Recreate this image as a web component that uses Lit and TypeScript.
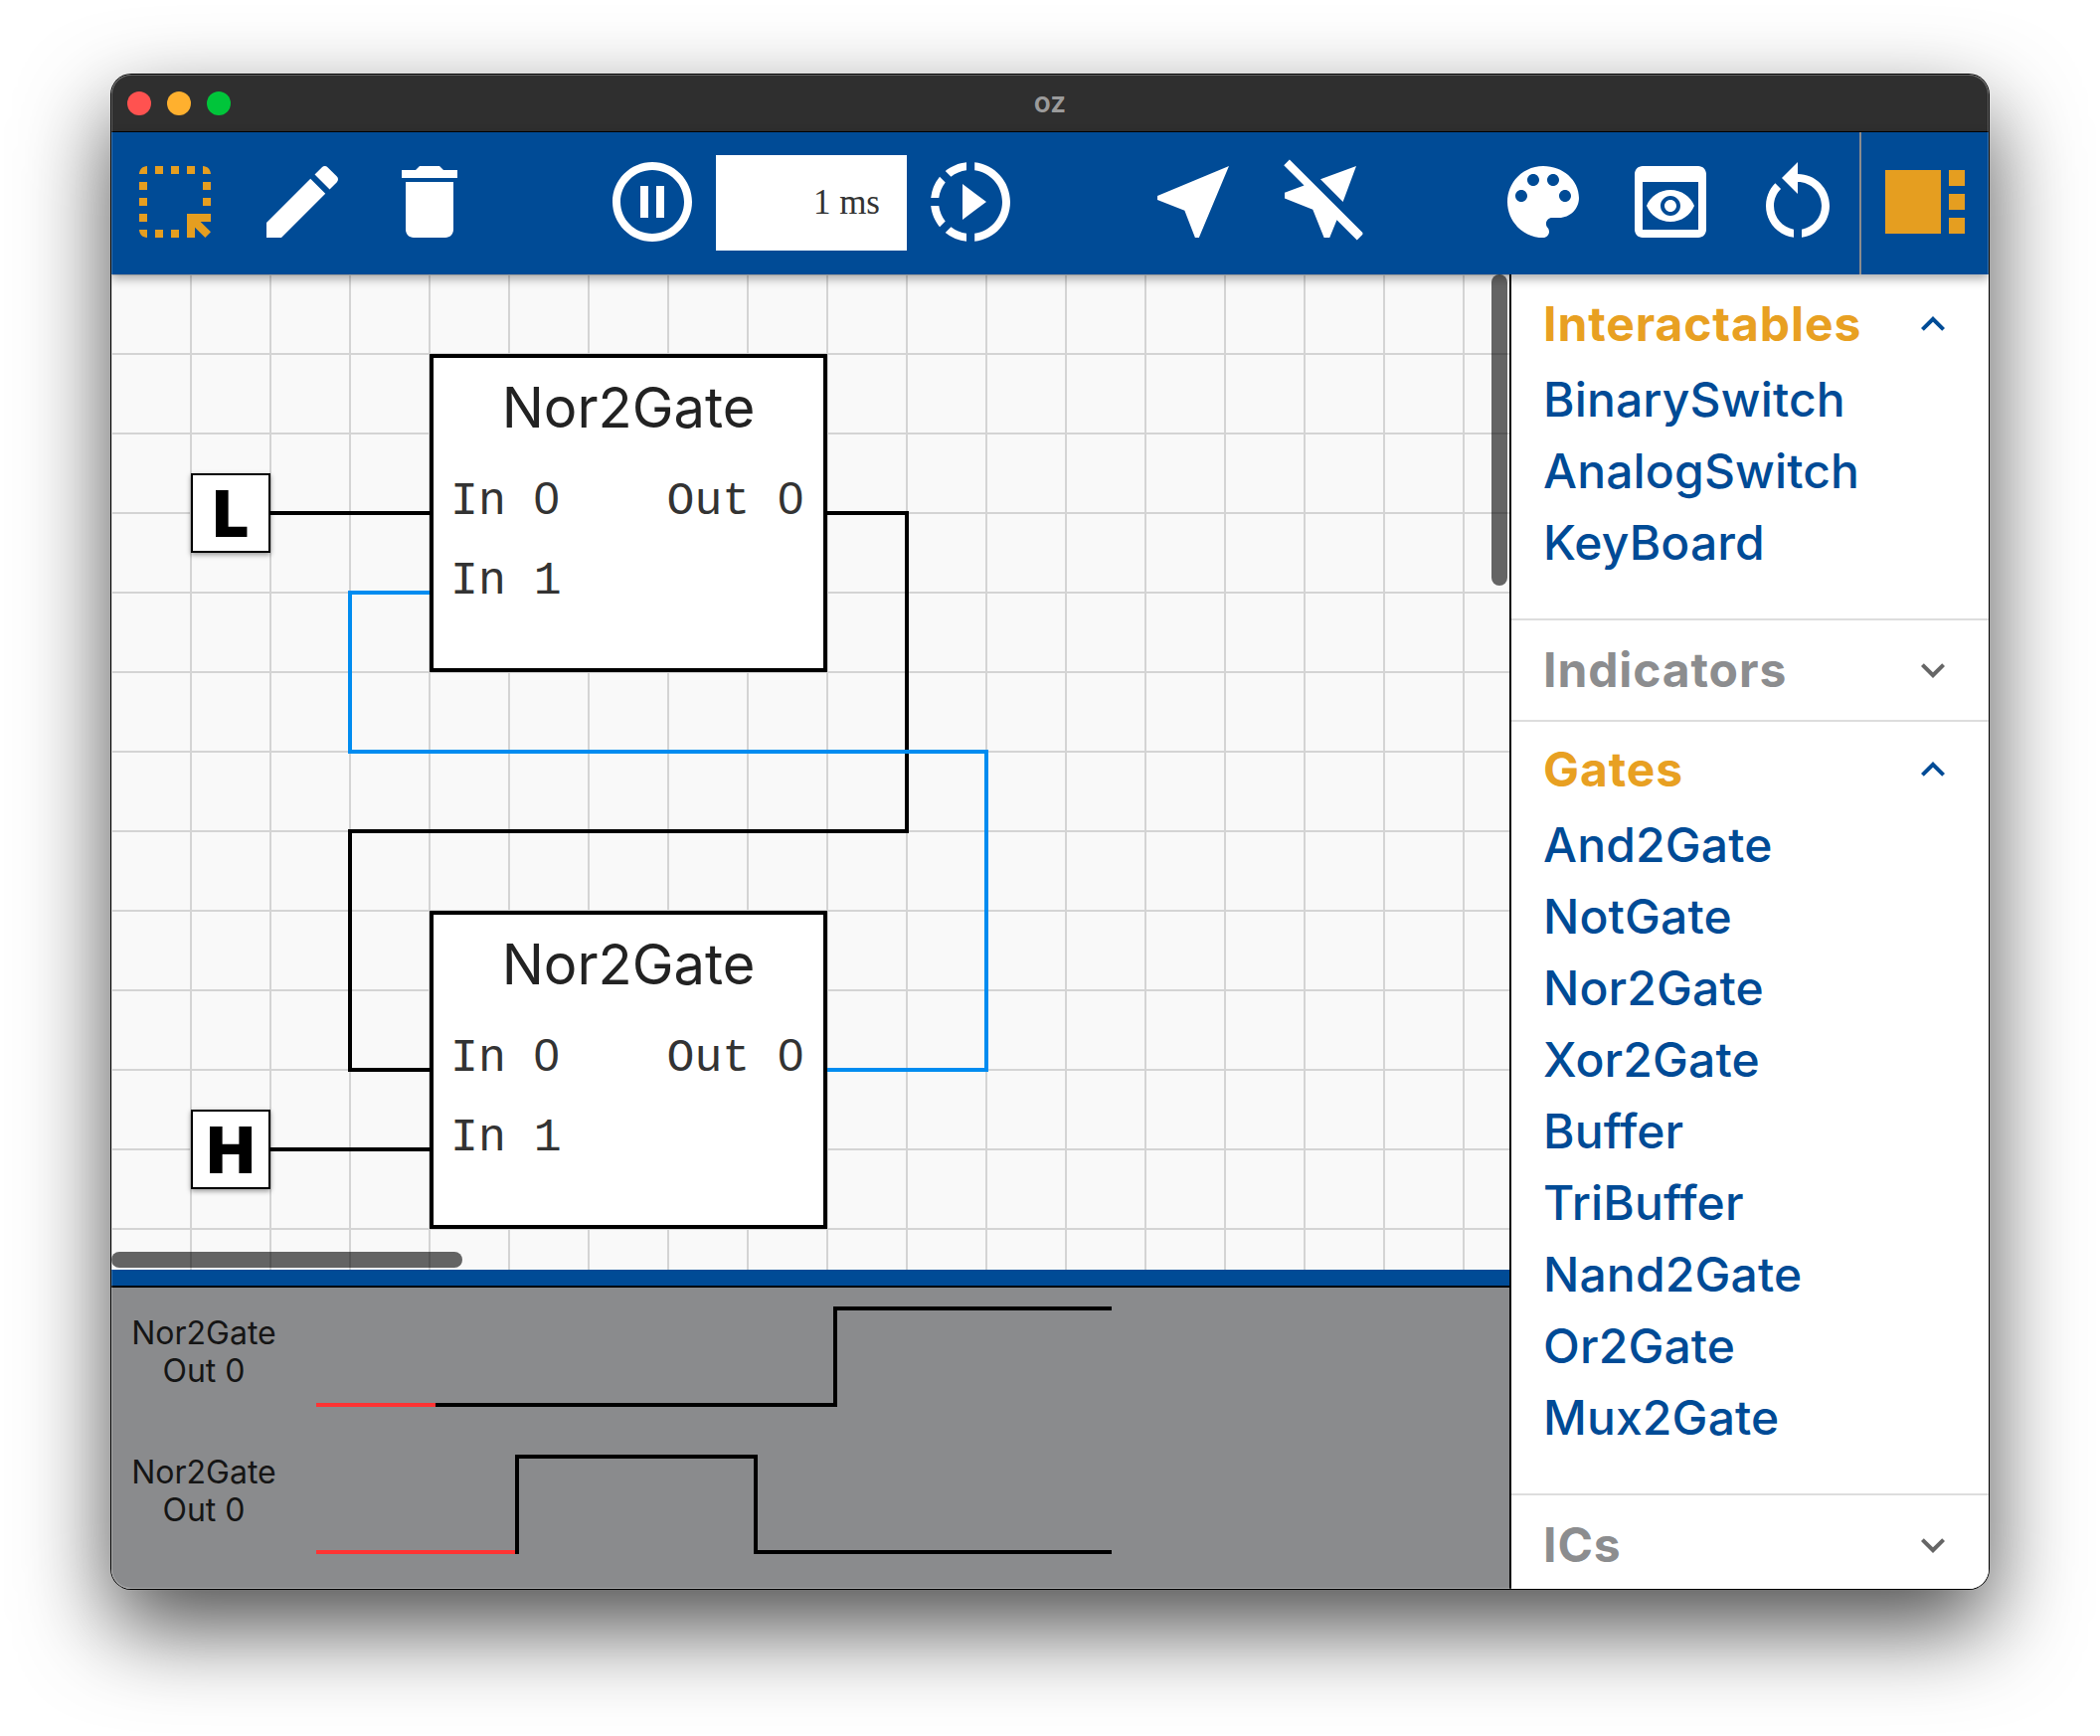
import { LitElement, html, svg, css } from "lit";
import { customElement } from "lit/decorators.js";

const ICONS: Record<string, string> = {
  select: "M17 5h-2V3h2v2zm-2 16h2v-2.59L19.59 21 21 19.59 18.41 17H21v-2h-6v6zm4-12h2V7h-2v2zm0 4h2v-2h-2v2zm-8 8h2v-2h-2v2zM7 5h2V3H7v2zM3 17h2v-2H3v2zm2 4v-2H3c0 1.1.9 2 2 2zM19 3v2h2c0-1.1-.9-2-2-2zm-8 2h2V3h-2v2zM3 9h2V7H3v2zm4 12h2v-2H7v2zm-4-8h2v-2H3v2zm0-8h2V3c-1.1 0-2 .9-2 2z",
  edit: "M3 17.25V21h3.75L17.81 9.94l-3.75-3.75L3 17.25zM20.71 7.04c.39-.39.39-1.02 0-1.41l-2.34-2.34c-.39-.39-1.02-.39-1.41 0l-1.83 1.83 3.75 3.75 1.83-1.83z",
  trash: "M6 19c0 1.1.9 2 2 2h8c1.1 0 2-.9 2-2V7H6v12zM19 4h-3.5l-1-1h-5l-1 1H5v2h14V4z",
  pause: "M9 16h2V8H9v8zm3-14C6.48 2 2 6.48 2 12s4.48 10 10 10 10-4.48 10-10S17.52 2 12 2zm0 18c-4.41 0-8-3.59-8-8s3.59-8 8-8 8 3.59 8 8-3.59 8-8 8zm1-4h2V8h-2v8z",
  slowmo: "M13.05 9.79L10 7.5v9l3.05-2.29L16 12zM11 4.07V2.05c-2.01.2-3.84 1-5.32 2.21L7.1 5.69A7.941 7.941 0 0 1 11 4.07zM5.69 7.1L4.26 5.68A9.949 9.949 0 0 0 2.05 11h2.02c.18-1.46.76-2.79 1.62-3.9zM4.07 13H2.05c.2 2.01 1 3.84 2.21 5.32l1.43-1.43A7.868 7.868 0 0 1 4.07 13zm1.61 6.74A9.981 9.981 0 0 0 11 21.95v-2.02a7.941 7.941 0 0 1-3.9-1.62l-1.42 1.43zM22 12c0 5.16-3.92 9.42-8.95 9.95v-2.02C16.97 19.41 20 16.05 20 12s-3.03-7.41-6.95-7.93V2.05C18.08 2.58 22 6.84 22 12z",
  near: "M21 3L3 10.53v.98l6.84 2.65L12.48 21h.98L21 3z",
  nearOff: "M12 6.34L21 3l-3.34 9L12 6.34zM22.61 19.78L4.22 1.39 2.81 2.81l5.07 5.07L3 9.69v1.41l7.07 2.83L12.9 21h1.41l1.81-4.46 5.07 5.07 1.42-1.42z",
  palette: "M12 3c-4.97 0-9 4.03-9 9s4.03 9 9 9c.83 0 1.5-.67 1.5-1.5 0-.39-.15-.74-.39-1.01-.23-.26-.38-.61-.38-.99 0-.83.67-1.5 1.5-1.5H16c2.76 0 5-2.24 5-5 0-4.42-4.03-8-9-8zm-5.5 9c-.83 0-1.5-.67-1.5-1.5S5.67 9 6.5 9 8 9.67 8 10.5 7.33 12 6.5 12zm3-4C8.67 8 8 7.33 8 6.5S8.67 5 9.5 5s1.5.67 1.5 1.5S10.33 8 9.5 8zm5 0c-.83 0-1.5-.67-1.5-1.5S13.67 5 14.5 5s1.5.67 1.5 1.5S15.33 8 14.5 8zm3 4c-.83 0-1.5-.67-1.5-1.5S16.67 9 17.5 9s1.5.67 1.5 1.5-.67 1.5-1.5 1.5z",
  preview: "M19 3H5C3.89 3 3 3.9 3 5v14c0 1.1.89 2 2 2h14c1.1 0 2-.9 2-2V5C21 3.9 20.11 3 19 3zM19 19H5V7h14V19zM13.5 13c0 .83-.67 1.5-1.5 1.5s-1.5-.67-1.5-1.5c0-.83.67-1.5 1.5-1.5S13.5 12.17 13.5 13zM12 9c-2.73 0-5.06 1.66-6 4 .94 2.34 3.27 4 6 4s5.06-1.66 6-4C17.06 10.66 14.73 9 12 9zM12 15.5c-1.38 0-2.5-1.12-2.5-2.5 0-1.38 1.12-2.5 2.5-2.5 1.38 0 2.5 1.12 2.5 2.5C14.5 14.38 13.38 15.5 12 15.5z",
  restart: "M12 5V2L8 6l4 4V7c3.31 0 6 2.69 6 6 0 2.97-2.16 5.43-5 5.91v2.02c3.95-.49 7-3.85 7-7.93 0-4.42-3.58-8-8-8zm-6 8c0-1.65.67-3.15 1.76-4.24L6.34 7.34C4.9 8.79 4 10.79 4 13c0 4.08 3.05 7.44 7 7.93v-2.02c-2.84-.48-5-2.94-5-5.91z",
  sidebar: "M16 20H2V4h14v16zm2-12h4V4h-4v4zm0 12h4v-4h-4v4zm0-6h4v-4h-4v4z",
  up: "M12 8l-6 6 1.41 1.41L12 10.83l4.59 4.58L18 14z",
  down: "M16.59 8.59L12 13.17 7.41 8.59 6 10l6 6 6-6z",
};

const icon = (name: string, size = 96) => html`<svg width=${size} height=${size} viewBox="0 0 24 24" fill="currentColor"><path d=${ICONS[name]}></path></svg>`;

const SECTIONS = [
  { title: "Interactables", open: true, items: ["BinarySwitch", "AnalogSwitch", "KeyBoard"] },
  { title: "Indicators", open: false, items: [] },
  { title: "Gates", open: true, items: ["And2Gate", "NotGate", "Nor2Gate", "Xor2Gate", "Buffer", "TriBuffer", "Nand2Gate", "Or2Gate", "Mux2Gate"] },
  { title: "ICs", open: false, items: [] },
];

// canvas coordinates, origin at the top left of the grid
const GATES = [{ x: 320, y: 80 }, { x: 320, y: 640 }];
const SWITCHES = [{ x: 80, y: 200, label: "L" }, { x: 80, y: 840, label: "H" }];
const BLACK_WIRES = [
  "M160 240H320",
  "M160 880H320",
  "M720 240H800V560H240V800H320",
];
const BLUE_WIRES = [
  "M320 320H240V480H880V800H720",
];

// Liberation Mono dots its zero, the reference does not
const zero = html`<span class="zero">0</span>`;

@customElement("app-root")
export class AppRoot extends LitElement {
  render() {
    return html`
      <div class="window">
        <header class="titlebar">
          <div class="lights">
            <span class="light red"></span>
            <span class="light amber"></span>
            <span class="light green"></span>
          </div>
          <span class="title">oz</span>
        </header>
        <nav class="toolbar">
          <button class="tool orange">${icon("select")}</button>
          <button class="tool">${icon("edit")}</button>
          <button class="tool">${icon("trash")}</button>
          <span class="space"></span>
          <button class="tool">${icon("pause")}</button>
          <div class="delay">1 ms</div>
          <button class="tool">${icon("slowmo")}</button>
          <span class="space"></span>
          <button class="tool">${icon("near")}</button>
          <button class="tool">${icon("nearOff")}</button>
          <span class="space"></span>
          <button class="tool">${icon("palette")}</button>
          <button class="tool">${icon("preview")}</button>
          <button class="tool">${icon("restart")}</button>
          <button class="tool orange panel">${icon("sidebar")}</button>
        </nav>
        <div class="body">
          <main class="main">
            <section class="canvas">
              <svg class="wires" width="1408" height="1000" fill="none" stroke-width="4" stroke-linejoin="miter">
                ${BLACK_WIRES.map((d) => svg`<path d=${d} stroke="#000"></path>`)}
                ${BLUE_WIRES.map((d) => svg`<path d=${d} stroke="#008cf0"></path>`)}
              </svg>
              ${GATES.map((g) => html`
                <div class="gate" style="left:${g.x}px;top:${g.y}px">
                  <div class="gate-name">Nor2Gate</div>
                  <div class="ports">
                    <span>In ${zero}</span><span>Out ${zero}</span>
                    <span>In 1</span>
                  </div>
                </div>`)}
              ${SWITCHES.map((s) => html`
                <div class="switch" style="left:${s.x}px;top:${s.y}px">${s.label}</div>`)}
              <div class="scroll-v"></div>
              <div class="scroll-h"></div>
            </section>
            <div class="splitter"></div>
            <section class="graph">
              <div class="graph-row">
                <div class="graph-label">Nor2Gate<br />Out 0</div>
              </div>
              <div class="graph-row">
                <div class="graph-label">Nor2Gate<br />Out 0</div>
              </div>
              <svg class="waves" width="1100" height="300" fill="none" stroke-width="4">
                <path d="M326 118H728V21H1006" stroke="#000"></path>
                <path d="M206 118H326" stroke="#ff3333"></path>
                <path d="M408 268V170H648V266H1006" stroke="#000"></path>
                <path d="M206 266H406" stroke="#ff3333"></path>
              </svg>
            </section>
          </main>
          <aside class="sidebar">
            ${SECTIONS.map((s) => html`
              <section class="group ${s.open ? "open" : ""}">
                <div class="group-head">
                  <span>${s.title}</span>
                  ${icon(s.open ? "up" : "down", 48)}
                </div>
                ${s.open ? html`<ul>${s.items.map((i) => html`<li>${i}</li>`)}</ul>` : ""}
              </section>`)}
          </aside>
        </div>
      </div>
    `;
  }

  static styles = css`
    :host {
      display: block;
      width: 2112px;
      height: 1746px;
      padding: 75px 112px 0;
      box-sizing: border-box;
      background: #fff;
      font-family: Inter, "Liberation Sans", sans-serif;
      overflow: hidden;
    }
    .window {
      position: relative;
      display: flex;
      flex-direction: column;
      height: 1523px;
      border-radius: 20px;
      overflow: hidden;
      background: #fff;
      box-shadow: 0 0 0 1px #000, 0 38px 90px rgba(0, 0, 0, 0.7);
    }
    .window::after {
      content: "";
      position: absolute;
      inset: 0;
      z-index: 3;
      border-radius: 20px;
      box-shadow: inset 0 0 0 1px rgba(255, 255, 255, 0.25);
      pointer-events: none;
    }
    .titlebar {
      position: relative;
      flex: none;
      height: 57px;
      display: flex;
      align-items: center;
      justify-content: center;
      background: #2f2f2f;
      border-bottom: 1px solid #000;
    }
    .lights {
      position: absolute;
      left: 16px;
      top: 17px;
      display: flex;
      gap: 16px;
    }
    .light {
      width: 24px;
      height: 24px;
      border-radius: 50%;
    }
    .red { background: #ff5250; }
    .amber { background: #ffb02e; }
    .green { background: #00c53a; }
    .title {
      color: #9b9b9b;
      font-size: 28px;
      font-weight: 600;
      margin-bottom: 2px;
    }
    .toolbar {
      position: relative;
      z-index: 2;
      flex: none;
      height: 143px;
      display: flex;
      background: #004b96;
      box-shadow: 0 4px 10px rgba(0, 0, 0, 0.35);
    }
    .tool {
      flex: none;
      width: 128px;
      padding: 22px 0 0;
      border: none;
      background: none;
      color: #fff;
      display: flex;
      justify-content: center;
      align-items: flex-start;
    }
    .tool svg { display: block; }
    .orange { color: #e59e20; }
    .panel {
      width: 130px;
      margin-left: -2px;
      border-left: 2px solid #8a8b8d;
    }
    .space { flex: none; width: 96px; }
    .delay {
      flex: none;
      width: 192px;
      height: 96px;
      margin-top: 23px;
      padding-right: 27px;
      box-sizing: border-box;
      background: #fff;
      color: #333;
      font: 35px/96px "Liberation Serif", serif;
      text-align: right;
    }
    .body {
      flex: 1;
      min-height: 0;
      display: flex;
    }
    .main {
      flex: 1;
      min-width: 0;
      display: flex;
      flex-direction: column;
    }
    .canvas {
      position: relative;
      flex: none;
      height: 1001px;
      overflow: hidden;
      background-color: #f9f9f9;
      background-image:
        linear-gradient(#d4d4d4 2px, transparent 2px),
        linear-gradient(90deg, #d4d4d4 2px, transparent 2px);
      background-size: 80px 80px;
      background-position: 0 79px, 79px 0;
    }
    .wires {
      position: absolute;
      left: 0;
      top: 0;
    }
    .gate {
      position: absolute;
      width: 400px;
      height: 320px;
      box-sizing: border-box;
      border: 4px solid #000;
      background: #fff;
      color: #222;
    }
    .gate-name {
      text-align: center;
      font-size: 56px;
      line-height: 70px;
      margin-top: 15px;
    }
    .ports {
      display: grid;
      grid-template-columns: 1fr auto;
      padding: 0 20px 0 17px;
      margin-top: 16px;
      font: 46.5px/80px "Liberation Mono", monospace;
      color: #333;
    }
    .zero {
      display: inline-block;
      width: 1ch;
      text-align: center;
      font-family: "Liberation Sans", sans-serif;
      font-weight: 400;
    }
    .switch {
      position: absolute;
      width: 80px;
      height: 80px;
      box-sizing: border-box;
      border: 2px solid #000;
      background: #fff;
      box-shadow: 0 2px 5px rgba(0, 0, 0, 0.4);
      text-align: center;
      font-size: 64px;
      font-weight: 900;
      line-height: 78px;
      color: #000;
    }
    .scroll-v {
      position: absolute;
      right: 2px;
      top: 0;
      width: 16px;
      height: 313px;
      border-radius: 8px;
      background: rgba(0, 0, 0, 0.6);
    }
    .scroll-h {
      position: absolute;
      left: 0;
      bottom: 2px;
      width: 353px;
      height: 16px;
      border-radius: 8px;
      background: rgba(0, 0, 0, 0.6);
    }
    .splitter {
      flex: none;
      height: 16px;
      background: #004b96;
      border-bottom: 2px solid #000;
    }
    .graph {
      position: relative;
      flex: 1;
      background: #8a8b8d;
      padding-top: 27px;
    }
    .graph-row {
      height: 140px;
    }
    .graph-label {
      width: 186px;
      text-align: center;
      font-size: 32px;
      line-height: 38px;
      color: #151515;
    }
    .waves {
      position: absolute;
      left: 0;
      top: 0;
    }
    .sidebar {
      flex: none;
      width: 482px;
      box-sizing: border-box;
      border-left: 2px solid #000;
      background: #fff;
      overflow: hidden;
    }
    .group {
      border-bottom: 2px solid #ddd;
    }
    .group-head {
      display: flex;
      justify-content: space-between;
      align-items: center;
      padding: 26px 32px;
      height: 48px;
      font-size: 48px;
      font-weight: 700;
      letter-spacing: 0.9px;
      line-height: 48px;
      color: #8c8d8f;
    }
    .group-head svg { color: #666; }
    .group.open .group-head { color: #e8a022; padding-bottom: 16px; }
    .group.open .group-head svg { color: #004b96; }
    .group:nth-child(3) .group-head { padding-top: 24px; }
    ul {
      margin: 0;
      padding: 0 0 40px 32px;
      list-style: none;
    }
    li {
      font-size: 48px;
      font-weight: 500;
      letter-spacing: 0.15px;
      line-height: 72px;
      color: #004b96;
    }
  `;
}
